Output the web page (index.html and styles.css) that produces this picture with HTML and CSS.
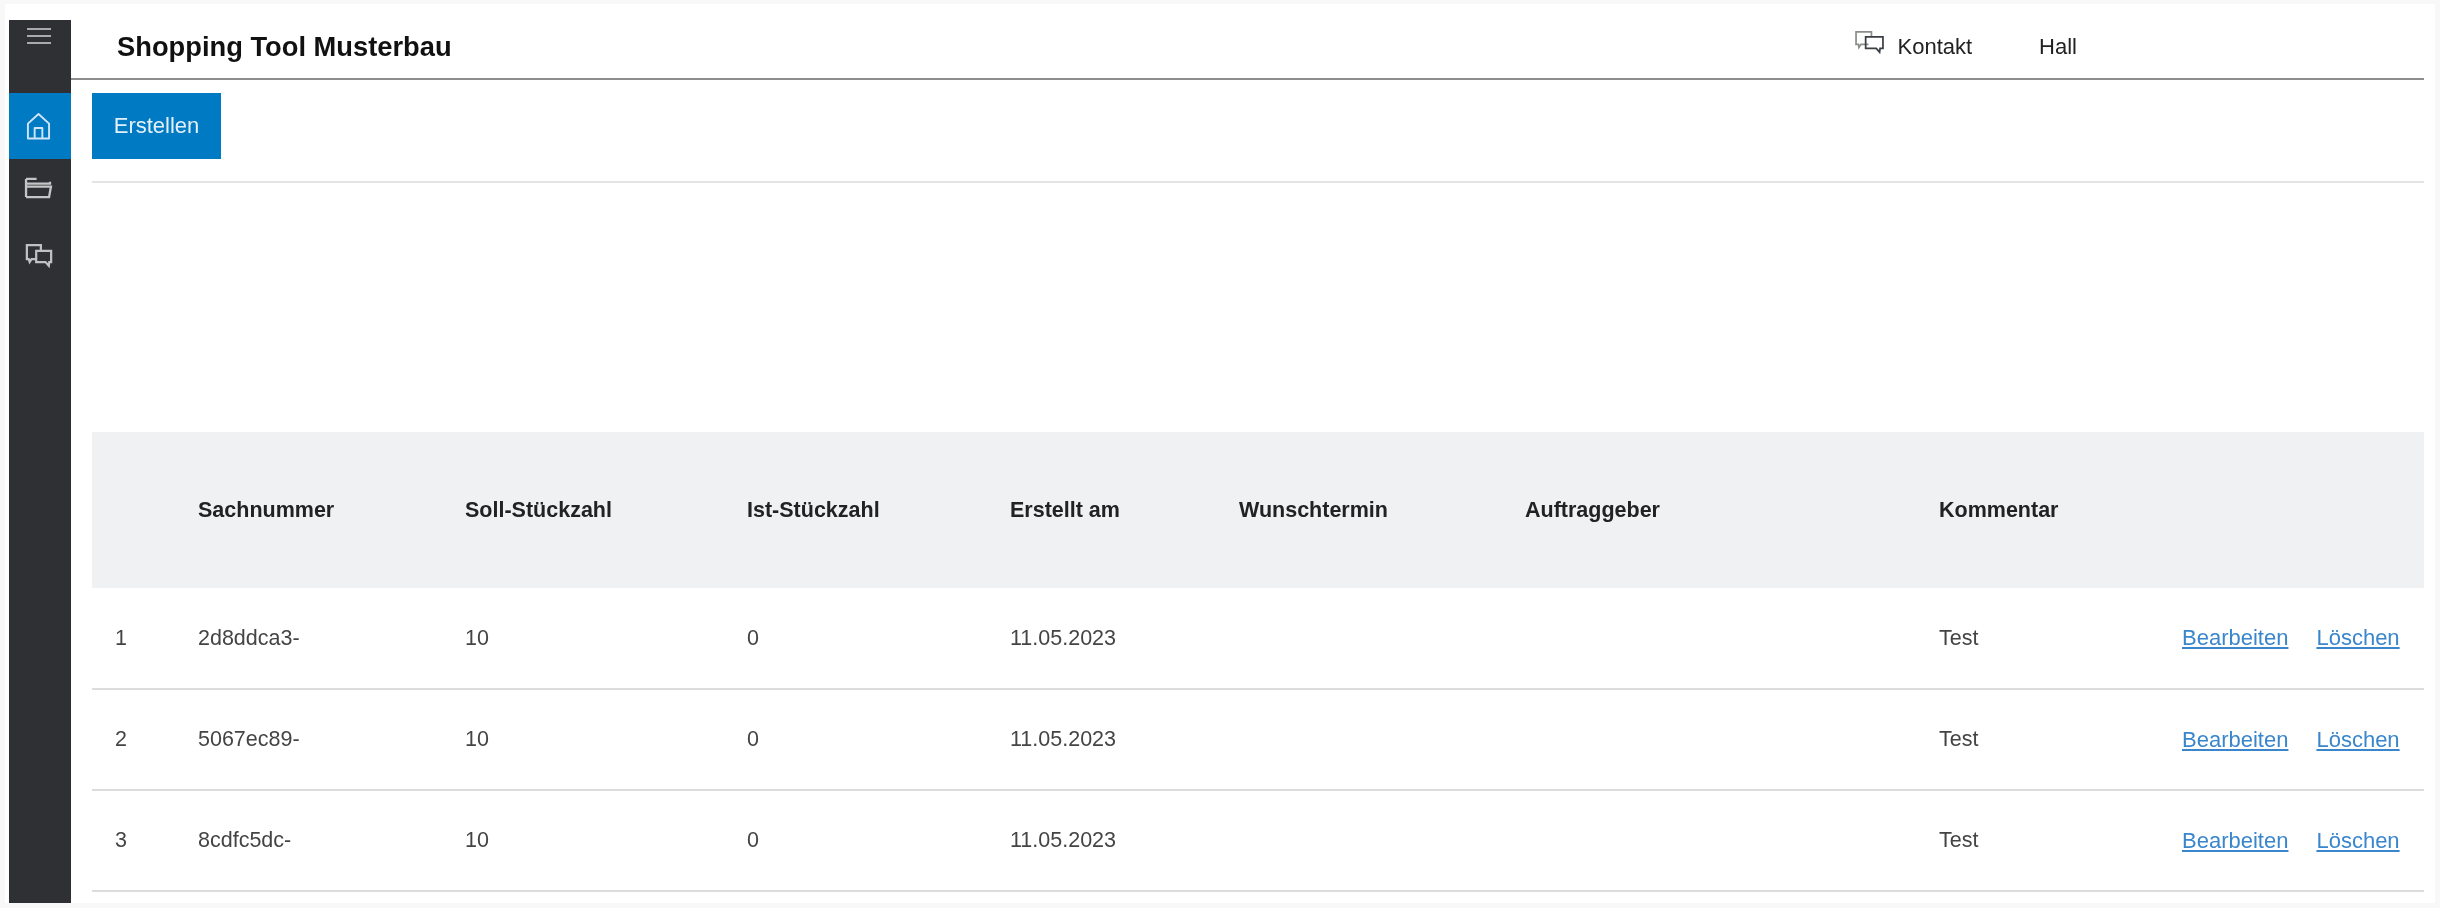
FILE: index.html
```html
<!DOCTYPE html>
<html lang="de">
<head>
<meta charset="utf-8">
<title>Shopping Tool Musterbau</title>
<link rel="stylesheet" href="styles.css">
</head>
<body>
<div class="frame">
  <nav class="sidebar">
    <div class="menu-toggle">
      <svg class="icon-menu" viewBox="0 0 24 16" width="24" height="16" fill="none" stroke="#a9aaab" stroke-width="2"><path d="M0 1h24M0 8h24M0 15h24" /></svg>
    </div>
    <a class="nav-item active">
      <svg viewBox="0 0 26 28" width="25" height="28" fill="none" stroke="#cfe5f7" stroke-width="2" stroke-linejoin="round"><path d="M2 27V11.500L13 1.500l11 10V27zM9 27V16h8v11"/></svg>
    </a>
    <a class="nav-item folder">
      <svg viewBox="0 0 30 24" width="29" height="23" fill="none" stroke="#c4c5c6" stroke-width="2.400"><path d="M2 3h11M2 22V3M2 8h25v-2M2 22h24l2-11H3"/></svg>
    </a>
    <a class="nav-item chat">
      <svg viewBox="0 0 30 26" width="28" height="25" fill="none" stroke="#c0c1c2" stroke-width="2.400"><path d="M12 17H7l-2 3-1-3H2V2h15v5"/><path d="M12 8h16v12h-2l-.500 4-3.500-4H12z"/></svg>
    </a>
  </nav>
  <main class="main">
    <header class="topbar">
      <h1 class="title">Shopping Tool Musterbau</h1>
      <div class="contact">
        <svg viewBox="0 0 30 26" width="29" height="25" fill="none" stroke="#3a3f46" stroke-width="1.800"><path d="M14 14H6l-2 3-.500-3H1V1h16v5" stroke="#8b8f8b"/><path d="M11 6h18v12h-3l-.500 4-3.500-4H11z"/></svg>
        <span>Kontakt</span>
      </div>
      <div class="user">Hall</div>
    </header>
    <section class="content">
      <div class="toolbar">
        <button class="btn" type="button">Erstellen</button>
      </div>
      <table class="orders">
        <colgroup>
          <col class="c1"><col class="c2"><col class="c3"><col class="c4"><col class="c5"><col class="c6"><col class="c7"><col class="c8"><col class="c9">
        </colgroup>
        <thead>
          <tr>
            <th></th><th>Sachnummer</th><th>Soll-Stückzahl</th><th>Ist-Stückzahl</th><th>Erstellt am</th><th>Wunschtermin</th><th>Auftraggeber</th><th>Kommentar</th><th></th>
          </tr>
        </thead>
        <tbody>
          <tr>
            <td>1</td><td>2d8ddca3-</td><td>10</td><td>0</td><td>11.05.2023</td><td></td><td></td><td>Test</td>
            <td class="actions"><a href="#">Bearbeiten</a><a href="#">Löschen</a></td>
          </tr>
          <tr>
            <td>2</td><td>5067ec89-</td><td>10</td><td>0</td><td>11.05.2023</td><td></td><td></td><td>Test</td>
            <td class="actions"><a href="#">Bearbeiten</a><a href="#">Löschen</a></td>
          </tr>
          <tr>
            <td>3</td><td>8cdfc5dc-</td><td>10</td><td>0</td><td>11.05.2023</td><td></td><td></td><td>Test</td>
            <td class="actions"><a href="#">Bearbeiten</a><a href="#">Löschen</a></td>
          </tr>
        </tbody>
      </table>
    </section>
  </main>
</div>
</body>
</html>
```
FILE: styles.css
```css
* { box-sizing: border-box; }
html, body { height: 100%; }
body {
  margin: 0;
  background: #f8f8f8;
  font-family: "Liberation Sans", Arial, sans-serif;
  font-size: 21.500px;
  color: #333;
  overflow: hidden;
}
.frame {
  display: flex;
  height: 899px;
  margin: 4px 5px 0;
  padding-left: 4px;
  background: #fff;
  filter: blur(0.4px);
}
.sidebar {
  flex: 0 0 62px;
  margin-top: 16px;
  background: #2e3033;
}
.menu-toggle {
  height: 73px;
  padding: 8px 0 0 18px;
}
.icon-menu { display: block; }
.nav-item {
  display: flex;
  justify-content: center;
  padding-right: 3px;
}
.nav-item.active {
  height: 66px;
  align-items: center;
  background: #007ac3;
}
.nav-item.folder { height: 66px; padding-top: 17px; }
.nav-item.chat { padding-top: 18px; }
.main {
  flex: 1;
  min-width: 0;
  margin-right: 11px;
}
.topbar {
  display: flex;
  align-items: center;
  height: 76px;
  padding: 12px 347px 0 46px;
  border-bottom: 2px solid #8d8d8d;
}
.title {
  margin: 0 auto 0 0;
  font-size: 27.300px;
  font-weight: 700;
  color: #111;
}
.contact {
  display: flex;
  align-items: center;
  gap: 13px;
  color: #222;
  font-size: 22px;
}
.contact svg { margin-top: -8px; }
.user {
  margin-left: 67px;
  color: #222;
  font-size: 22px;
}
.content { padding-left: 21px; }
.toolbar {
  padding: 13px 0 22px;
  border-bottom: 2px solid #e4e4e4;
  margin-bottom: 249px;
}
.btn {
  display: block;
  width: 129px;
  height: 66px;
  padding: 0;
  border: 0;
  background: #007ac3;
  color: #e4f0f9;
  font: inherit;
  font-size: 22px;
}
.orders {
  width: 100%;
  table-layout: fixed;
  border-collapse: collapse;
}
.c1 { width: 83px; }
.c2 { width: 267px; }
.c3 { width: 282px; }
.c4 { width: 263px; }
.c5 { width: 229px; }
.c6 { width: 286px; }
.c7 { width: 414px; }
.c8 { width: 243px; }
.c9 { width: 265px; }
.orders thead tr {
  height: 156px;
  background: #eff1f2;
}
.orders th {
  padding: 0 0 0 23px;
  text-align: left;
  font-size: 21.500px;
  font-weight: 700;
  color: #222;
}
.orders tbody tr {
  height: 101px;
  border-bottom: 2px solid #dcdcdc;
}
.orders td {
  padding: 0 0 0 23px;
  color: #444;
}
.orders .actions {
  padding-left: 23px;
  white-space: nowrap;
}
.actions a {
  color: #3a86cc;
  text-decoration: underline;
  font-size: 22px;
}
.actions a + a { margin-left: 28px; }
```
